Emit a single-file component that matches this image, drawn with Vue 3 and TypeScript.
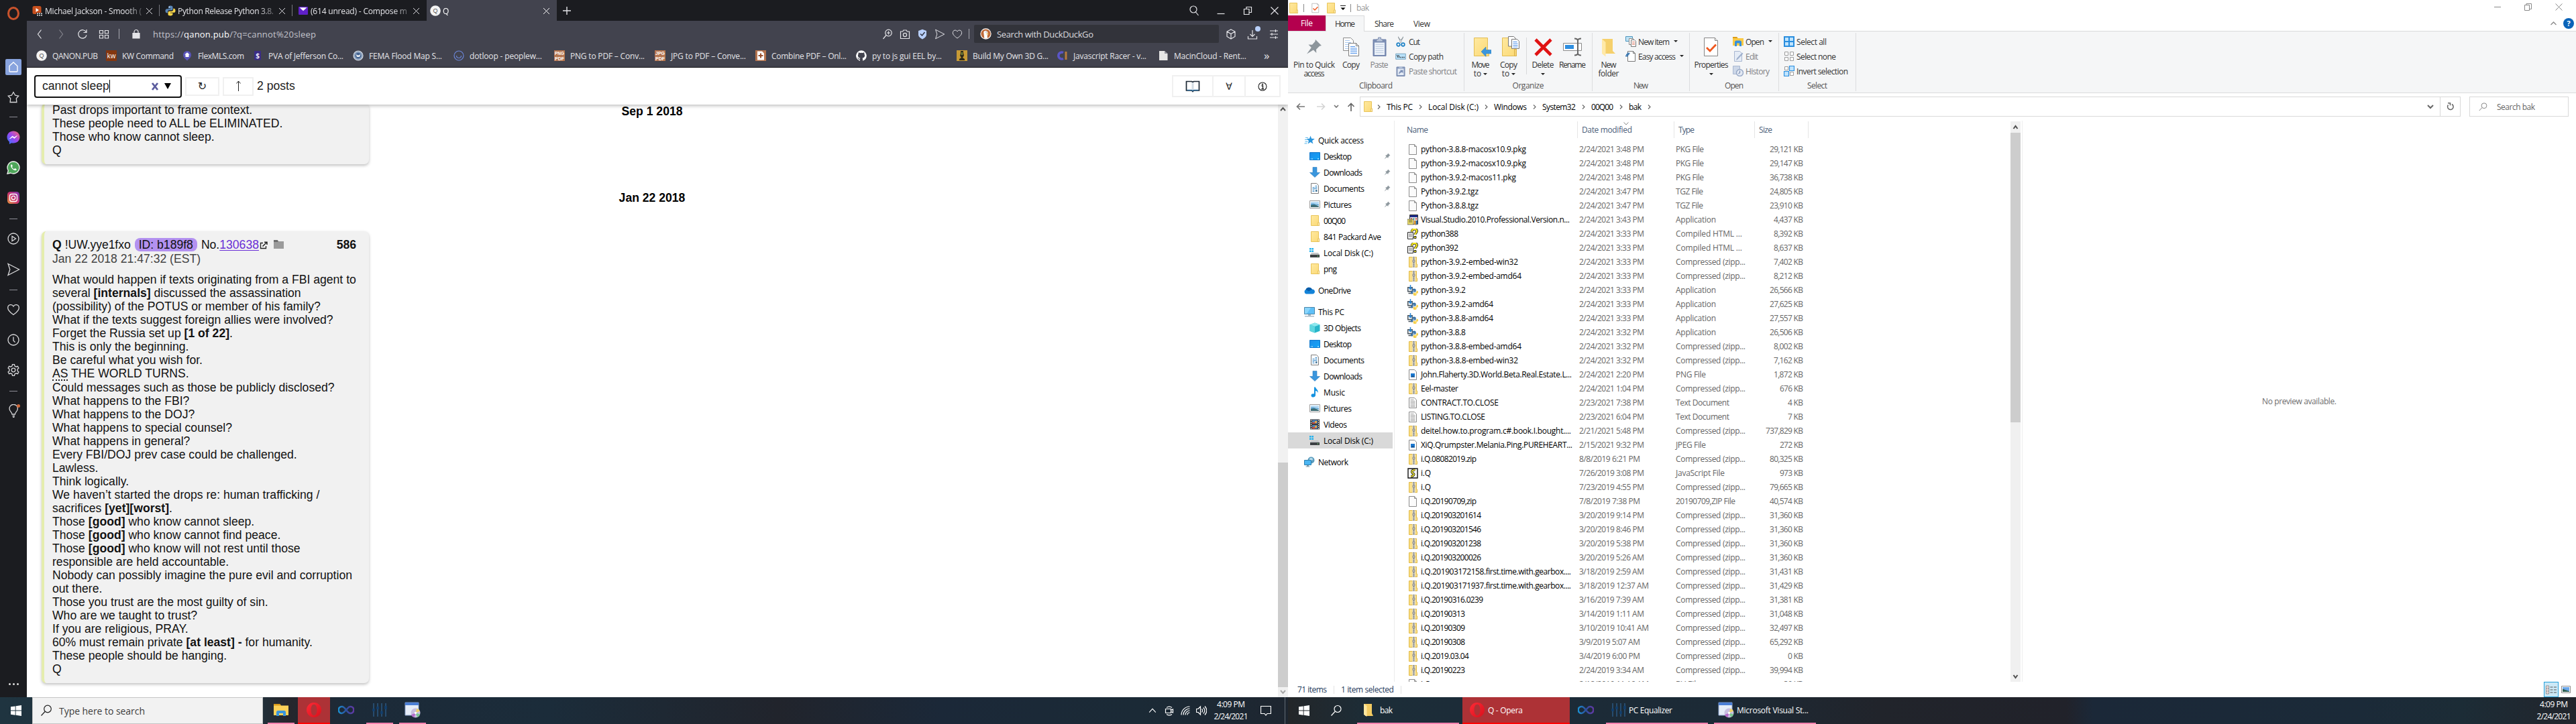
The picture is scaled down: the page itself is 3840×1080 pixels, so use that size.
<script setup lang="ts">
import type { Directive } from 'vue'

// Spreads a run of text over a given width by adjusting its tracking.
const vFit: Directive<HTMLElement, number | undefined> = {
  mounted(el, binding) {
    const target = binding.value
    const count = (el.textContent ?? '').trim().length
    if (!target || count < 2) return
    const range = document.createRange()
    range.selectNodeContents(el)
    const gap = (target - range.getBoundingClientRect().width) / (count - 1)
    el.style.letterSpacing = `${gap.toFixed(3)}px`
    el.style.marginRight = `${(-gap).toFixed(3)}px`
  },
}

interface Tab { icon: string; title: string; w: number; fit: number; active?: boolean }
const tabs: Tab[] = [
  { icon: 'i-video', title: 'Michael Jackson - Smooth (', w: 198, fit: 144 },
  { icon: 'i-python', title: 'Python Release Python 3.8.', w: 198, fit: 143 },
  { icon: 'i-yahoo', title: '(614 unread) - Compose m', w: 200, fit: 144 },
  { icon: 'i-qsite', title: 'Q', w: 194, fit: 0, active: true },
]

interface Bookmark { icon: string; title: string; w: number; fit: number }
const bookmarks: Bookmark[] = [
  { icon: 'i-qsite', title: 'QANON.PUB', w: 104, fit: 68 },
  { icon: 'i-kw', title: 'KW Command', w: 113, fit: 77 },
  { icon: 'i-flex', title: 'FlexMLS.com', w: 105, fit: 69 },
  { icon: 'i-pva', title: 'PVA of Jefferson Co...', w: 150, fit: 112 },
  { icon: 'i-fema', title: 'FEMA Flood Map S...', w: 150, fit: 109 },
  { icon: 'i-loop', title: 'dotloop - peoplew...', w: 150, fit: 108 },
  { icon: 'i-png', title: 'PNG to PDF – Conv...', w: 150, fit: 111 },
  { icon: 'i-jpg', title: 'JPG to PDF – Conve...', w: 150, fit: 112 },
  { icon: 'i-combine', title: 'Combine PDF – Onl...', w: 150, fit: 112 },
  { icon: 'i-github', title: 'py to js gui EEL by...', w: 150, fit: 104 },
  { icon: 'i-build', title: 'Build My Own 3D G...', w: 150, fit: 113 },
  { icon: 'i-racer', title: 'Javascript Racer - v...', w: 150, fit: 109 },
  { icon: 'i-page', title: 'MacinCloud - Rent...', w: 150, fit: 108 },
]

interface Rail { icon: string; h: number }
const rail: Rail[] = [
  { icon: 's-star', h: 45 }, { icon: '-', h: 15 }, { icon: 's-messenger', h: 46 },
  { icon: 's-whatsapp', h: 44 }, { icon: 's-insta', h: 46 }, { icon: '-', h: 16 },
  { icon: 's-play', h: 44 }, { icon: 's-send', h: 48 }, { icon: '-', h: 12 },
  { icon: 's-heart', h: 48 }, { icon: 's-clock', h: 42 }, { icon: 's-gear', h: 48 },
  { icon: '-', h: 14 }, { icon: 's-bulb', h: 46 },
]

const post: string[] = [
  'What would happen if texts originating from a FBI agent to',
  'several <b>[internals]</b> discussed the assassination',
  '(possibility) of the POTUS or member of his family?',
  'What if the texts suggest foreign allies were involved?',
  'Forget the Russia set up <b>[1 of 22]</b>.',
  'This is only the beginning.',
  'Be careful what you wish for.',
  '<abbr>AS</abbr> THE WORLD TURNS.',
  'Could messages such as those be publicly disclosed?',
  'What happens to the FBI?',
  'What happens to the DOJ?',
  'What happens to special counsel?',
  'What happens in general?',
  'Every FBI/DOJ prev case could be challenged.',
  'Lawless.',
  'Think logically.',
  'We haven’t started the drops re: human trafficking /',
  'sacrifices <b>[yet][worst]</b>.',
  'Those <b>[good]</b> who know cannot sleep.',
  'Those <b>[good]</b> who know cannot find peace.',
  'Those <b>[good]</b> who know will not rest until those',
  'responsible are held accountable.',
  'Nobody can possibly imagine the pure evil and corruption',
  'out there.',
  'Those you trust are the most guilty of sin.',
  'Who are we taught to trust?',
  'If you are religious, PRAY.',
  '60% must remain private <b>[at least] -</b> for humanity.',
  'These people should be hanging.',
  'Q',
]

interface NavItem { icon: string; label: string; fit: number; pin?: boolean; sel?: boolean; top?: boolean }
const nav: NavItem[] = [
  { icon: 'n-quick', label: 'Quick access', fit: 68, top: true },
  { icon: 'n-desktop', label: 'Desktop', fit: 42, pin: true },
  { icon: 'n-down', label: 'Downloads', fit: 58, pin: true },
  { icon: 'n-docs', label: 'Documents', fit: 61, pin: true },
  { icon: 'n-pics', label: 'Pictures', fit: 42, pin: true },
  { icon: 'n-folder', label: '00Q00', fit: 33 },
  { icon: 'n-folder', label: '841 Packard Ave', fit: 86 },
  { icon: 'n-disk', label: 'Local Disk (C:)', fit: 74 },
  { icon: 'n-folder', label: 'png', fit: 20 },
  { icon: 'n-cloud', label: 'OneDrive', fit: 49, top: true },
  { icon: 'n-pc', label: 'This PC', fit: 39, top: true },
  { icon: 'n-cube', label: '3D Objects', fit: 56 },
  { icon: 'n-desktop', label: 'Desktop', fit: 42 },
  { icon: 'n-docs', label: 'Documents', fit: 61 },
  { icon: 'n-down', label: 'Downloads', fit: 58 },
  { icon: 'n-music', label: 'Music', fit: 32 },
  { icon: 'n-pics', label: 'Pictures', fit: 42 },
  { icon: 'n-video', label: 'Videos', fit: 35 },
  { icon: 'n-disk', label: 'Local Disk (C:)', fit: 74, sel: true },
  { icon: 'n-net', label: 'Network', fit: 45, top: true },
]

type FileRow = [icon: string, name: string, nameWidth: number, date: string, type: string, size: string]
const ZIP = 'Compressed (zipp...'
const files: FileRow[] = [
  ['f-blank', 'python-3.8.8-macosx10.9.pkg', 157, '2/24/2021 3:48 PM', 'PKG File', '29,121 KB'],
  ['f-blank', 'python-3.9.2-macosx10.9.pkg', 157, '2/24/2021 3:48 PM', 'PKG File', '29,147 KB'],
  ['f-blank', 'python-3.9.2-macos11.pkg', 142, '2/24/2021 3:48 PM', 'PKG File', '36,738 KB'],
  ['f-blank', 'Python-3.9.2.tgz', 86, '2/24/2021 3:47 PM', 'TGZ File', '24,805 KB'],
  ['f-blank', 'Python-3.8.8.tgz', 86, '2/24/2021 3:47 PM', 'TGZ File', '23,910 KB'],
  ['f-setup', 'Visual.Studio.2010.Professional.Version.n...', 222, '2/24/2021 3:43 PM', 'Application', '4,437 KB'],
  ['f-help', 'python388', 56, '2/24/2021 3:33 PM', 'Compiled HTML ...', '8,392 KB'],
  ['f-help', 'python392', 56, '2/24/2021 3:33 PM', 'Compiled HTML ...', '8,637 KB'],
  ['f-zip', 'python-3.9.2-embed-win32', 145, '2/24/2021 3:33 PM', ZIP, '7,402 KB'],
  ['f-zip', 'python-3.9.2-embed-amd64', 150, '2/24/2021 3:33 PM', ZIP, '8,212 KB'],
  ['f-pyinst', 'python-3.9.2', 67, '2/24/2021 3:33 PM', 'Application', '26,566 KB'],
  ['f-pyinst', 'python-3.9.2-amd64', 108, '2/24/2021 3:33 PM', 'Application', '27,625 KB'],
  ['f-pyinst', 'python-3.8.8-amd64', 108, '2/24/2021 3:33 PM', 'Application', '27,557 KB'],
  ['f-pyinst', 'python-3.8.8', 67, '2/24/2021 3:32 PM', 'Application', '26,506 KB'],
  ['f-zip', 'python-3.8.8-embed-amd64', 150, '2/24/2021 3:32 PM', ZIP, '8,002 KB'],
  ['f-zip', 'python-3.8.8-embed-win32', 145, '2/24/2021 3:32 PM', ZIP, '7,162 KB'],
  ['f-image', 'John.Flaherty.3D.World.Beta.Real.Estate.L...', 225, '2/24/2021 2:20 PM', 'PNG File', '1,872 KB'],
  ['f-zip', 'Eel-master', 56, '2/24/2021 1:04 PM', ZIP, '676 KB'],
  ['f-text', 'CONTRACT.TO.CLOSE', 116, '2/23/2021 7:38 PM', 'Text Document', '4 KB'],
  ['f-text', 'LISTING.TO.CLOSE', 96, '2/23/2021 6:04 PM', 'Text Document', '7 KB'],
  ['f-zip', 'deitel.how.to.program.c#.book.I.bought....', 224, '2/21/2021 5:48 PM', ZIP, '737,829 KB'],
  ['f-image', 'XiQ.Qrumpster.Melania.Ping.PUREHEART...', 226, '2/15/2021 9:32 PM', 'JPEG File', '272 KB'],
  ['f-zip', 'i.Q.08082019.zip', 83, '8/8/2019 6:21 PM', ZIP, '80,325 KB'],
  ['f-js', 'i.Q', 15, '7/26/2019 3:08 PM', 'JavaScript File', '973 KB'],
  ['f-zip', 'i.Q', 15, '7/23/2019 4:55 PM', ZIP, '79,665 KB'],
  ['f-blank', 'i.Q.20190709,zip', 83, '7/8/2019 7:38 PM', '20190709,ZIP File', '40,574 KB'],
  ['f-zip', 'i.Q.201903201614', 90, '3/20/2019 9:14 PM', ZIP, '31,360 KB'],
  ['f-zip', 'i.Q.201903201546', 90, '3/20/2019 8:46 PM', ZIP, '31,360 KB'],
  ['f-zip', 'i.Q.201903201238', 90, '3/20/2019 5:38 PM', ZIP, '31,360 KB'],
  ['f-zip', 'i.Q.201903200026', 90, '3/20/2019 5:26 AM', ZIP, '31,360 KB'],
  ['f-zip', 'i.Q.201903172158.first.time.with.gearbox....', 224, '3/18/2019 2:59 AM', ZIP, '31,431 KB'],
  ['f-zip', 'i.Q.201903171937.first.time.with.gearbox....', 224, '3/18/2019 12:37 AM', ZIP, '31,429 KB'],
  ['f-zip', 'i.Q.20190316.0239', 93, '3/16/2019 7:39 AM', ZIP, '31,381 KB'],
  ['f-zip', 'i.Q.20190313', 66, '3/14/2019 1:11 AM', ZIP, '31,048 KB'],
  ['f-zip', 'i.Q.20190309', 66, '3/10/2019 10:41 AM', ZIP, '32,497 KB'],
  ['f-zip', 'i.Q.20190308', 66, '3/9/2019 5:07 AM', ZIP, '65,292 KB'],
  ['f-zip', 'i.Q.2019.03.04', 72, '3/4/2019 6:00 PM', ZIP, '0 KB'],
  ['f-zip', 'i.Q.20190223', 66, '2/24/2019 3:34 AM', ZIP, '39,994 KB'],
  ['f-blank', 'i.Q', 15, '2/18/2019 11:16 AM', 'BV File', '39 KB'],
]
const dateWidth: Record<number, number> = { 15: 91, 16: 91, 17: 97, 18: 104 }
const sizeWidth: Record<number, number> = { 4: 23, 5: 29, 6: 35, 8: 44, 9: 50, 10: 56 }
const typeWidth: Record<string, number> = {
  'PKG File': 42, 'TGZ File': 41, Application: 60, 'Compiled HTML ...': 99, [ZIP]: 104,
  'PNG File': 45, 'Text Document': 80, 'JPEG File': 45, 'JavaScript File': 73, '20190709,ZIP File': 89, 'BV File': 37,
}

interface Crumb { label: string; fit: number; w: number }
const crumbs: Crumb[] = [
  { label: 'This PC', fit: 39, w: 62 },
  { label: 'Local Disk (C:)', fit: 75, w: 98 },
  { label: 'Windows', fit: 49, w: 72 },
  { label: 'System32', fit: 50, w: 73 },
  { label: '00Q00', fit: 33, w: 56 },
  { label: 'bak', fit: 19, w: 42 },
]
</script>

<template>
  <svg class="defs" width="0" height="0" aria-hidden="true">
    <defs>
      <linearGradient id="g-msg" x1="0" y1="1" x2="1" y2="0"><stop offset="0" stop-color="#2f7bff" /><stop offset=".5" stop-color="#9a46f0" /><stop offset="1" stop-color="#ff6968" /></linearGradient>
      <linearGradient id="g-insta" x1="0" y1="1" x2="1" y2="0"><stop offset="0" stop-color="#e8993d" /><stop offset=".5" stop-color="#c8306f" /><stop offset="1" stop-color="#7b3bb8" /></linearGradient>
      <linearGradient id="g-blue" x1="0" y1="0" x2="1" y2="1"><stop offset="0" stop-color="#1e8ce8" /><stop offset="1" stop-color="#10a5f8" /></linearGradient>
      <linearGradient id="g-fold" x1="0" y1="0" x2="1" y2="1"><stop offset="0" stop-color="#ffe9a0" /><stop offset="1" stop-color="#fbd975" /></linearGradient>
      <linearGradient id="g-vs" x1="0" y1="0" x2="1" y2="0"><stop offset="0" stop-color="#1b8fd0" /><stop offset=".5" stop-color="#2c4f9c" /><stop offset="1" stop-color="#6238a4" /></linearGradient>
      <linearGradient id="g-opera" x1="0" y1="0" x2="1" y2="1"><stop offset="0" stop-color="#ff2a36" /><stop offset="1" stop-color="#d8101c" /></linearGradient>
    </defs>
    <!-- tab and bookmark icons -->
    <symbol id="i-video" viewBox="0 0 16 16"><rect x=".5" y="1" width="13" height="12" rx="2.5" fill="#c8501e" /><path d="M5.500 4v6l4.500-3z" fill="#fff" /><path d="M6 11h9v5H6z" fill="#1c1d21" /><path d="M7 11.500h2v1.500H7zM10 11.500h2v1.500h-2zM13 11.500h2v1.500h-2zM7 14h2v1.500H7zM10 14h2v1.500h-2zM13 14h2v1.500h-2z" fill="#ddd" /></symbol>
    <symbol id="i-python" viewBox="0 0 16 16"><path d="M8 .5C5.500.5 5 1.500 5 2.700V4.500h3.500v.7H3C1.500 5.200.5 6.300.5 8.300s1 3 2.200 3H4V9.500c0-1.200 1-2.200 2.200-2.200h3.500c1 0 1.800-.8 1.800-1.800V2.700C11.500 1.300 10.500.5 8 .5z" fill="#5a86b5" /><path d="M8 15.500c2.500 0 3.500-1 3.500-2.200v-1.800H8v-.7h5c1.500 0 2.500-1 2.500-2.900s-.8-3.200-2.200-3.200H12.200v1.700c0 1.200-1 2.300-2.200 2.300H6.300c-1 0-1.800.8-1.800 1.800v2.800c0 1.400 1 2.200 3.500 2.200z" fill="#f5d44a" /><circle cx="6.500" cy="2.500" r=".8" fill="#fff" /></symbol>
    <symbol id="i-yahoo" viewBox="0 0 16 16"><rect x="1" y="2" width="14" height="12" rx="1" fill="#5f20c8" /><path d="M2.500 3.200h11L8 8.300z" fill="#fff" /></symbol>
    <symbol id="i-qsite" viewBox="0 0 16 16"><circle cx="8" cy="8" r="7.800" fill="#f4f4f4" /><text x="8" y="11.200" font-size="9" text-anchor="middle" font-family="Liberation Sans, sans-serif" fill="#555">Q</text></symbol>
    <symbol id="i-kw" viewBox="0 0 16 16"><path d="M0 0h16v16H0z" fill="#83360f" /><text x="8" y="11.500" font-size="10" text-anchor="middle" font-family="Open Sans, sans-serif" fill="#fff">kw</text></symbol>
    <symbol id="i-flex" viewBox="0 0 16 16"><path d="M8 1a6 6 0 0 1 6 6.200C14 11 10 13 8 15.500 6 13 2 11 2 7.200A6 6 0 0 1 8 1z" fill="#5a55b8" /><path d="M8 3.200 4.300 6.500h1.200V10h5V6.500h1.200z" fill="#fff" /></symbol>
    <symbol id="i-pva" viewBox="0 0 16 16"><path d="M3 1h10v13.500H3z" fill="#3b2d85" /><text x="8" y="11.500" font-size="10" text-anchor="middle" font-weight="bold" font-family="Open Sans, sans-serif" fill="#e8e8f8">$</text></symbol>
    <symbol id="i-fema" viewBox="0 0 16 16"><circle cx="8" cy="8" r="7" fill="#8aa0bd" stroke="#d5dbe3" stroke-width="1.200" /><circle cx="8" cy="8" r="4.300" fill="#41618f" /><path d="M4.500 6 8 7.500 11.500 6 10 10H6z" fill="#e4e8ee" /></symbol>
    <symbol id="i-loop" viewBox="0 0 16 16"><circle cx="8" cy="8" r="7" fill="none" stroke="#6b86d8" stroke-width="1.200" /><path d="M4.500 8a3.500 3.500 0 0 0 7 0" fill="none" stroke="#6b86d8" stroke-width="1.200" /></symbol>
    <symbol id="i-png" viewBox="0 0 16 16"><path d="M0 0h16v16H0z" fill="#b5744e" /><text x="8" y="7" font-size="7" font-weight="bold" text-anchor="middle" font-family="Liberation Sans, sans-serif" fill="#fff" textLength="14" lengthAdjust="spacingAndGlyphs">PNG</text><text x="8" y="14.500" font-size="7" font-weight="bold" text-anchor="middle" font-family="Liberation Sans, sans-serif" fill="#fff" textLength="14" lengthAdjust="spacingAndGlyphs">PDF</text></symbol>
    <symbol id="i-jpg" viewBox="0 0 16 16"><path d="M0 0h16v16H0z" fill="#b5744e" /><text x="8" y="7" font-size="7" font-weight="bold" text-anchor="middle" font-family="Liberation Sans, sans-serif" fill="#fff" textLength="14" lengthAdjust="spacingAndGlyphs">JPG</text><text x="8" y="14.500" font-size="7" font-weight="bold" text-anchor="middle" font-family="Liberation Sans, sans-serif" fill="#fff" textLength="14" lengthAdjust="spacingAndGlyphs">PDF</text></symbol>
    <symbol id="i-combine" viewBox="0 0 16 16"><path d="M0 0h16v16H0z" fill="#b5744e" /><path d="M3 1.500h7l3 3v10H3z" fill="#fff" /><path d="M7 4.500h2V7h2.500v2H9v2.500H7V9H4.500V7H7z" fill="#9a5230" /></symbol>
    <symbol id="i-github" viewBox="0 0 16 16"><path d="M8 .3a7.900 7.900 0 0 0-2.500 15.400c.4 0 .5-.2.5-.4v-1.500c-2.200.5-2.700-1-2.700-1-.4-.9-.9-1.200-.9-1.200-.7-.5.1-.5.1-.5.800.1 1.200.8 1.200.8.700 1.200 1.900.9 2.300.7.1-.5.3-.9.500-1.100-1.800-.2-3.600-.9-3.600-4 0-.9.300-1.600.8-2.100-.1-.2-.4-1 .1-2.100 0 0 .7-.2 2.200.8a7.600 7.600 0 0 1 4 0c1.500-1 2.200-.8 2.200-.8.4 1.100.2 1.900.1 2.100.5.600.8 1.300.8 2.100 0 3.100-1.900 3.800-3.700 4 .3.300.6.800.6 1.500v2.200c0 .2.1.5.600.4A7.900 7.900 0 0 0 8 .3z" fill="#fff" /></symbol>
    <symbol id="i-build" viewBox="0 0 16 16"><path d="M0 0h16v16H0z" fill="#c79a35" /><path d="M6 1h4v3l1 4-2 3 3 2v2H4v-2l3-2-2-3 1-3z" fill="#2d2a1a" /><path d="M7 3h2v4H7z" fill="#7a8a3a" /></symbol>
    <symbol id="i-racer" viewBox="0 0 16 16"><path d="M9 3.500A5 5 0 1 0 9 12.500" fill="none" stroke="#5a55c8" stroke-width="3.500" /><path d="M11.500 2h3v12h-3z" fill="#b87b3c" /></symbol>
    <symbol id="i-page" viewBox="0 0 16 16"><path d="M2 1h8l4.500 4v10H2z" fill="#e6e6e6" /><path d="M10 1v4h4.500z" fill="#8e8f98" /></symbol>
    <!-- browser rail -->
    <symbol id="s-home" viewBox="0 0 20 20"><path d="M4 8.500 10 3l6 5.500V16a1 1 0 0 1-1 1H5a1 1 0 0 1-1-1z" /></symbol>
    <symbol id="s-star" viewBox="0 0 20 20"><path d="m10 2.500 2.700 4.700 5 .9-3.400 3.700.6 5.700H5.100l.6-5.700-3.400-3.700 5-.9z" /></symbol>
    <symbol id="s-messenger" viewBox="0 0 20 20"><path d="M10 .5C4.500.5.5 4.400.5 9.500c0 2.900 1.300 5.300 3.400 7V20l3.300-1.800c.9.200 1.800.3 2.800.3 5.500 0 9.500-3.900 9.500-9S15.500.5 10 .5z" fill="url(#g-msg)" stroke="none" /><path d="m4.500 12 4-4 2.800 2L15.500 7.500l-4 4-2.800-2z" fill="#fff" stroke="#fff" stroke-width=".8" /></symbol>
    <symbol id="s-whatsapp" viewBox="0 0 20 20"><path d="M10 1a9 9 0 0 0-7.700 13.500L1 19.200l4.800-1.200A9 9 0 1 0 10 1z" fill="#4ea65a" stroke="#e9efe9" stroke-width="1.400" /><path d="M6.500 5.500C5 8 8 13.500 13 14.300c1.500-.3 1.800-1.300 1.600-2L12.300 11l-1.200 1.200C9.500 11.700 8.300 10.300 7.800 9l1-1L8 5.500z" fill="#fff" stroke="none" /></symbol>
    <symbol id="s-insta" viewBox="0 0 20 20"><rect x="1" y="1" width="18" height="18" rx="4.500" fill="url(#g-insta)" stroke="none" /><rect x="4.500" y="4.500" width="11" height="11" rx="3" stroke="#fff" /><circle cx="10" cy="10" r="2.700" stroke="#fff" /></symbol>
    <symbol id="s-play" viewBox="0 0 20 20"><circle cx="10" cy="10" r="8" /><path d="M8 6.500v7l5.500-3.500z" /></symbol>
    <symbol id="s-send" viewBox="0 0 20 20"><path d="M2 1.500 18.500 10 2 18.500 4.800 10z" /></symbol>
    <symbol id="s-heart" viewBox="0 0 20 20"><path d="M10 17.500C6 14.500 1.700 11.500 1.700 7.200c0-5 6.300-6.200 8.300-2.200 2-4 8.300-2.800 8.300 2.200 0 4.300-4.300 7.300-8.300 10.300z" /></symbol>
    <symbol id="s-clock" viewBox="0 0 20 20"><circle cx="10" cy="10" r="8" /><path d="M10 5.500V11l2.500 2.500" /></symbol>
    <symbol id="s-gear" viewBox="0 0 20 20"><circle cx="10" cy="10" r="2.800" /><path d="M8.500 1.700h3l.5 2.400 2.100 1.100 2.300-.8 1.500 2.600-1.800 1.600v2.800l1.800 1.600-1.500 2.600-2.300-.8-2.100 1.100-.5 2.400h-3L8 15.900l-2.100-1.100-2.300.8L2.100 13l1.800-1.600V8.600L2.100 7l1.500-2.600 2.300.8L8 4.100z" /></symbol>
    <symbol id="s-bulb" viewBox="0 0 20 20"><path d="M8 15c0-3-4-4.500-4-8.500a6.200 6.200 0 0 1 12.400 0c0 4-4 5.500-4 8.500zM8.500 17.500h3.500M9 19.500h2.500" /><circle cx="17.500" cy="2.500" r="2.500" fill="#d0683a" stroke="none" /></symbol>
    <!-- toolbar -->
    <symbol id="t-back" viewBox="0 0 16 16"><path d="m10.500 1.500-5 6.500 5 6.500" /></symbol>
    <symbol id="t-fwd" viewBox="0 0 16 16"><path d="m5.500 1.500 5 6.500-5 6.500" /></symbol>
    <symbol id="t-reload" viewBox="0 0 16 16"><path d="M13.500 5A6.200 6.200 0 1 0 14 9.500M14 1v4.500H9.500" /></symbol>
    <symbol id="t-grid" viewBox="0 0 16 16"><path d="M1.500 2.500h5v4.500h-5zM9.500 2.500h5v4.500h-5zM1.500 9.500h5V14h-5zM9.500 9.500h5V14h-5z" /></symbol>
    <symbol id="t-lock" viewBox="0 0 16 16"><path d="M3 6.500h10V14H3z" fill="#e4e4e8" /><path d="M5 6.500V4.500a3 3 0 0 1 6 0v2" /></symbol>
    <symbol id="t-zoom" viewBox="0 0 16 16"><circle cx="9.500" cy="6" r="4.800" /><path d="M9.500 3.500v5M7 6h5M6 9.500 1.500 15" /></symbol>
    <symbol id="t-cam" viewBox="0 0 16 16"><path d="M1.500 4h3.300l1-2h4.400l1 2h3.300v10.500h-13z" /><circle cx="8" cy="9" r="2.600" /></symbol>
    <symbol id="t-shield" viewBox="0 0 16 16"><path d="M8 .8 14 3v5.500c0 3.500-3.500 5.700-6 7-2.500-1.300-6-3.500-6-7V3z" fill="#b9d0fb" stroke="none" /><path d="m5 7.500 2.500 2.500L11.500 5" stroke="#2d3140" stroke-width="1.500" /></symbol>
    <symbol id="t-cube" viewBox="0 0 16 16"><path d="m8 1 6 3v7.500L8 15l-6-3.500V4zM2 4l6 3.500L14 4M8 7.500V15" /></symbol>
    <symbol id="t-dl" viewBox="0 0 16 16"><path d="M8 2v9M4.500 8 8 11.500 11.500 8M1.500 11v4h13v-4" /></symbol>
    <symbol id="t-set" viewBox="0 0 16 16"><path d="M2 3h12M2 8h12M2 13h12M10.500 1v4M5 6v4M10.500 11v4" /></symbol>
    <symbol id="t-search" viewBox="0 0 16 16"><circle cx="7" cy="6" r="5" /><path d="m10.500 10 4 5" /></symbol>
    <symbol id="t-min" viewBox="0 0 16 16"><path d="M2.500 12.500h11" /></symbol>
    <symbol id="t-restore" viewBox="0 0 16 16"><path d="M2.500 5.500h7.500v8H2.500zM6 5.500V2.500h7.500v8H10" /></symbol>
    <symbol id="t-close" viewBox="0 0 16 16"><path d="m2.500 2.500 11 11M13.500 2.500l-11 11" /></symbol>
    <symbol id="t-duck" viewBox="0 0 16 16"><circle cx="8" cy="8" r="7.700" fill="#fff" stroke="none" /><circle cx="8" cy="8" r="6.700" fill="#bf6a3a" stroke="none" /><path d="M6 14.500 5 6c0-3 4.500-3.500 5.500-.5L11 9l-1 1.500.5 4z" fill="#fff" stroke="none" /><path d="M8.500 7.500h4L9.500 9z" fill="#e8b532" stroke="none" /><circle cx="8.500" cy="5.500" r=".6" fill="#333" stroke="none" /></symbol>
    <!-- navigation pane -->
    <symbol id="n-quick" viewBox="0 0 16 16"><path d="m9.500 1.500 1.600 4.300 4.700.2-3.700 2.900 1.300 4.600-3.900-2.600-3.800 2.600 1.200-4.500L4 6l4-.2z" fill="#2a95dd" /><path d="M2 4.500h4M1 7.500h4M1.500 10.500h4M.5 13h4" stroke="#58b7ec" /></symbol>
    <symbol id="n-desktop" viewBox="0 0 16 16"><path d="M.5 2.500h15v11H.5z" fill="url(#g-blue)" stroke="#0b76cc" /><path d="M2 12h1M4 12h1M12 12h2" stroke="#fff" /></symbol>
    <symbol id="n-down" viewBox="0 0 16 16"><path d="M5 .5h6v8h4.500L8 15.500.5 8.500H5z" fill="#3a96dd" stroke="#2c7cc0" stroke-width=".6" /></symbol>
    <symbol id="n-docs" viewBox="0 0 16 16"><path d="M2.500.5h8l3 3v12h-11z" fill="#fff" stroke="#7d7d7d" /><path d="M4.500 6.500h3M8.500 4.500h3M8.500 6.500h3M4.500 8.500h7M4.500 10.500h3M4.500 12.500h3" stroke="#3a8bc8" /><path d="M9 10h2.500v3H9z" fill="#4a7a9c" /></symbol>
    <symbol id="n-pics" viewBox="0 0 16 16"><path d="M.5 2.500h15v11H.5z" fill="#fff" stroke="#9a9a9a" /><path d="M2 4h12v8H2z" fill="#b9dcf5" /><path d="M2 9c3-2 5-2 12 2v1H2z" fill="#3c6b72" /><path d="M2 7c3-1 5 0 12 1v1.500C9 8 5 8 2 9z" fill="#5aa0cf" /></symbol>
    <symbol id="n-folder" viewBox="0 0 16 16"><path d="M2.500.5h11v10.500h1v4.500h-12z" fill="url(#g-fold)" stroke="#e8c45a" /><path d="M12.500 11h2v4.500h-2z" fill="#fff0bc" stroke="#dfb84d" stroke-width=".7" /></symbol>
    <symbol id="n-disk" viewBox="0 0 16 16"><path d="M0 1h2.600v2.600H0zM3.400 1H6v2.600H3.400zM0 4.400h2.600V7H0zM3.400 4.400H6V7H3.400z" fill="#1fb1ee" /><path d="M3 8h10l2 3H1z" fill="#c3c6c8" /><path d="M1 11h14v4H1z" fill="#3c4043" /><circle cx="12.500" cy="13" r=".8" fill="#7be07b" /></symbol>
    <symbol id="n-cloud" viewBox="0 0 16 16"><path d="M3 13.500A3.500 3.500 0 0 1 2.500 7 5.300 5.300 0 0 1 12 6.500c2.500 0 4 1.700 4 3.600s-1.500 3.400-3.500 3.400z" fill="#1383d8" /><path d="M2.500 7A5.300 5.300 0 0 1 12 6.500L7 9.500z" fill="#0a5ca8" /></symbol>
    <symbol id="n-pc" viewBox="0 0 16 16"><path d="M.5 1.500h15v10H.5z" fill="#5fc0f7" stroke="#4b88ab" /><path d="m1 2h9L4 11H1z" fill="#8ad5fb" /><path d="M6 12h4v2H6zM1 14h14v1.500H1z" fill="#a9b9c4" /></symbol>
    <symbol id="n-cube" viewBox="0 0 16 16"><path d="m8 .5 7.500 2.700v9.600L8 15.500.5 12.800V3.200z" fill="#27b5c9" /><path d="m8 .5 7.500 2.700L8 6 .5 3.200z" fill="#8ee8ee" /><path d="M8 6v9.500L.5 12.800V3.200z" fill="#5fd6df" /></symbol>
    <symbol id="n-music" viewBox="0 0 16 16"><path d="M7 .5h2c.5 3 4.500 3.500 3.500 8.500C12 7 10.500 6 9 6v6.500c0 4-6.500 4-6.500.5C2.500 10.500 5 10 7 10.500z" fill="#1592e0" /></symbol>
    <symbol id="n-video" viewBox="0 0 16 16"><path d="M1 .5h14v15H1z" fill="#3b3b3b" /><path d="M4 1.500h8V7H4z" fill="#4b7fb5" /><path d="M4 9h8v5.500H4z" fill="#4b7fb5" /><path d="M4 5h5v2H4zM4 12h5v2.500H4z" fill="#c94e3f" /><path d="M8 3h3v3H8zM8 10h3v3H8z" fill="#e6a540" /><path d="M2.500 1.500v14M13.500 1.500v14" stroke="#fff" stroke-dasharray="1.500 1.500" /></symbol>
    <symbol id="n-net" viewBox="0 0 16 16"><circle cx="10.500" cy="5.500" r="5" fill="#5b9cbd" /><path d="M8 3c2-2 5-1 5 1s-3 3-5 2z" fill="#b7dcec" /><path d="M.5 5.500h10v7H.5z" fill="#4cb5f2" stroke="#2d7fae" /><path d="M4 13h3v1.500H4zM2.500 14.500h6v1h-6z" fill="#88a0ad" /></symbol>
    <symbol id="n-pin" viewBox="0 0 10 10"><path d="M6 .5 9.500 4l-1.200.3L6.500 6.200 6.300 8 4.500 6.500.5 9.500 3.500 5.500 2 3.700l1.800-.2L5.700 1.700z" fill="#8f999f" /></symbol>
    <!-- file types -->
    <symbol id="f-blank" viewBox="0 0 16 16"><path d="M2.500.5h8l3 3v12h-11z" fill="#fbfbfb" stroke="#8b8b8b" /><path d="M10.500.5v3h3" fill="none" stroke="#8b8b8b" /></symbol>
    <symbol id="f-text" viewBox="0 0 16 16"><path d="M2.500.5h8l3 3v12h-11z" fill="#fbfbfb" stroke="#8b8b8b" /><path d="M4.500 3.500h5M4.500 5.500h7M4.500 7.500h7M4.500 9.500h7M4.500 11.500h7M4.500 13.500h7" stroke="#a5a5a5" /></symbol>
    <symbol id="f-image" viewBox="0 0 16 16"><path d="M2.500.5h8l3 3v12h-11z" fill="#fbfbfb" stroke="#8b8b8b" /><path d="M5 6h6v5.500H5z" fill="#1c78cf" /><path d="M5 11.500 8 9l3 2.500z" fill="#124c86" /></symbol>
    <symbol id="f-zip" viewBox="0 0 16 16"><path d="M2.500.5h11v10.500h1v4.500h-12z" fill="#fbe08a" stroke="#e0b945" /><path d="M7.500 0h4v16h-4z" fill="#d8d8d0" /><path d="M9.500 0v16" stroke="#5c5c5c" stroke-width="1.600" stroke-dasharray="1.200 1" /><path d="M8 5h3v3H8z" fill="#c9c9c9" stroke="#666" stroke-width=".6" /></symbol>
    <symbol id="f-setup" viewBox="0 0 16 16"><path d="M3.500.5h12v14h-12z" fill="#e6e6e6" stroke="#333" /><path d="M4 1h11v3H4z" fill="#1b2a8a" /><path d="M5 5.500h2v2H5zM12 5.500h2v2h-2z" fill="#c33" /><path d="M8.500 5.500h2v2h-2z" fill="#2a8" /><path d="M0 7h9v8H0z" fill="#e8d96a" stroke="#555" stroke-width=".7" /><path d="M2 9h5M2 11h5" stroke="#6b6b2f" /><path d="M10 9h5v5l-2.500 2L10 14z" fill="#e79a28" /><path d="M12.500 9H15v5l-2.500 2z" fill="#2c6fb5" /></symbol>
    <symbol id="f-help" viewBox="0 0 16 16"><path d="M.5 5.500h8v10h-8z" fill="#fff" stroke="#222" /><path d="M2 8h5M2 10h5M2 12h5" stroke="#777" /><path d="M6.500 4.500C6.500 0 14.500-.5 14 4c-.3 2.500-2.500 2.500-2.500 5" fill="none" stroke="#222" stroke-width="3.800" /><path d="M6.500 4.500C6.500 0 14.500-.5 14 4c-.3 2.500-2.500 2.500-2.500 5" fill="none" stroke="#f5e81e" stroke-width="2.200" /><path d="M10 11.500h3v3h-3z" fill="#f5e81e" stroke="#222" /></symbol>
    <symbol id="f-pyinst" viewBox="0 0 16 16"><path d="M.7 3.700h6.500v6H.7zM1.500 12.500h7" fill="#e7ecef" stroke="#4a545c" stroke-width="1.400" /><path d="M4.500 0v6M2.500 4 4.500 6.500 6.500 4" fill="none" stroke="#2d86d3" stroke-width="1.500" /><path d="M10 5.500c-2 0-2.500.8-2.500 2v1.300h3v.6H6.500c-1 0-1.500.8-1.500 2s.5 2 1.500 2h1v-1c0-1 .8-1.700 1.700-1.700h2c.9 0 1.500-.7 1.500-1.500V7.500c0-1.200-.8-2-2.700-2z" fill="#3a73a6" /><path d="M11 16c2 0 2.700-.8 2.700-1.800v-.9H11v-.5h3.500c1 0 1.500-.8 1.500-2s-.5-2-1.300-2H13.500v1.300c0 1-.8 1.700-1.700 1.700h-1.600c-.8 0-1.400.6-1.400 1.400v1.300c0 1 .7 1.500 2.200 1.500z" fill="#f6cf48" /></symbol>
    <symbol id="f-js" viewBox="0 0 16 16"><path d="M1 1h14v14H1z" fill="#fff" stroke="#111" stroke-width="1.400" /><path d="M11.500 3c-6 0-6 4-3 5s.5 4.500-3.500 4.500" fill="none" stroke="#111" stroke-width="3.400" /><path d="M11.500 3c-6 0-6 4-3 5s.5 4.500-3.500 4.500" fill="none" stroke="#e8df3a" stroke-width="1.800" /></symbol>
    <!-- ribbon -->
    <symbol id="r-pin" viewBox="0 0 32 32"><path d="m18 5 9 9-3 .7-5 5 .3 5.300-4.500-4.500L5 26.500 11.800 17 7.500 12.500l5.500.2 4.300-4.700z" fill="#8d969c" /></symbol>
    <symbol id="r-copy" viewBox="0 0 32 32"><path d="M4.500 2.500h11l4 4v15h-15z" fill="#fff" stroke="#8b8b8b" /><path d="M7 6.500h7M7 9.500h9M7 12.500h8M7 15.500h8M7 18.500h8" stroke="#a8c8f0" /><path d="M12.500 10.500h11l4 4v15h-15z" fill="#fff" stroke="#7e7e7e" /><path d="M23.500 10.500v4h4" fill="none" stroke="#7e7e7e" /><path d="M15 15.500h7M15 18h10M15 20.500h10M15 23h10M15 25.500h10" stroke="#4f92ea" stroke-width="1.100" /></symbol>
    <symbol id="r-paste" viewBox="0 0 32 32"><path d="M7 5h19v24.500H7z" fill="#7d8fb5" stroke="#6e80a8" /><path d="M9 9.500h15V28H9z" fill="#eaf0f8" /><path d="M10.500 12.500h12M10.500 15.500h12M10.500 18.500h12M10.500 21.500h12M10.500 24.500h12" stroke="#c2d0e3" /><path d="M12 4.500h2.500V2h4v2.500H21V8h-9z" fill="#b9c5da" stroke="#8090b0" /></symbol>
    <symbol id="r-cut" viewBox="0 0 16 16"><path d="M4 0v2l4.500 8 1.200-2zM12 0v2L7.500 10 6.300 8z" fill="#8d979d" /><circle cx="4.500" cy="12.500" r="2.300" fill="none" stroke="#1a7fc4" stroke-width="1.700" /><circle cx="11.500" cy="12.500" r="2.300" fill="none" stroke="#1a7fc4" stroke-width="1.700" /></symbol>
    <symbol id="r-path" viewBox="0 0 16 16"><path d="M.7 4.200h14.600v8.100H.7z" fill="#b9e2fb" stroke="#7aa6bf" /><path d="M2.500 6 4 10M4.700 6l1.500 4" stroke="#222" /><path d="M7.500 9.500h1.300M10 9.500h1.300M12.400 9.500h1.300" stroke="#222" stroke-width="1.300" /></symbol>
    <symbol id="r-pshort" viewBox="0 0 16 16"><path d="M2 2h12v13.500H2z" fill="#8d9ebf" stroke="#7385aa" /><path d="M3.500 4.500h9V14h-9z" fill="#e5ecf6" /><path d="M5.500 1h5v2.500h-5z" fill="#b5c2d8" /><path d="M5.500 13c-.5-3 .5-4.500 2.500-5L6.800 6.500H11.500v4.700L10 9.700C8 10 6.500 11 5.500 13z" fill="#7c8fb6" /></symbol>
    <symbol id="r-move" viewBox="0 0 32 32"><path d="M6.500 2.500h20v18h2v9h-22z" fill="url(#g-fold)" stroke="#e2bd55" /><path d="m17 23 7-7v4.500h8V26h-8v4.500z" fill="#3b96dd" stroke="#2b78b8" stroke-width=".5" /></symbol>
    <symbol id="r-copyto" viewBox="0 0 32 32"><path d="M6.500 2.500h18v17h3v10h-21z" fill="url(#g-fold)" stroke="#e2bd55" /><path d="M24.500 19.500h3v10h-3z" fill="#f5d273" stroke="#dcb44a" /><path d="M15.500.5h8l2.500 2.500v12h-10.500z" fill="#fff" stroke="#777" /><path d="M20.500 4.500h8l3 3v11h-11z" fill="#fff" stroke="#777" /><path d="M22.500 8.500h6M22.500 11h7M22.500 13.500h7M22.500 16h7" stroke="#4f92ea" /></symbol>
    <symbol id="r-del" viewBox="0 0 32 32"><path d="M5 5 28 28M28 5 5 28" stroke="#e01313" stroke-width="4.600" fill="none" /></symbol>
    <symbol id="r-ren" viewBox="0 0 32 32"><path d="M2.500 10.500h27v11h-27z" fill="#fff" stroke="#8a8a8a" /><path d="M5 13h13v6H5z" fill="#2f8fe0" /><path d="M19 3.500c3 0 4.500 1 5 2.500.5-1.500 2-2.500 5-2.500M24 5.500v21M19 28.500c3 0 4.500-1 5-2.500.5 1.500 2 2.500 5 2.500" stroke="#666" stroke-width="2" fill="none" /></symbol>
    <symbol id="r-newf" viewBox="0 0 32 32"><path d="M6 4h16v18l4 4H10z" fill="#f5d06c" /><path d="M6 4 11.500 9v21.500L6 26z" fill="#ffe9a8" /></symbol>
    <symbol id="r-newi" viewBox="0 0 16 16"><path d="M.5.500h10v7H.5z" fill="#bfe3f5" stroke="#4b94bd" /><path d="M5.500 3.500h6v9h-6z" fill="#fff" stroke="#888" /><path d="M8.500 5.500h5l2 2v8h-7z" fill="#fff" stroke="#777" /><path d="M10 8.500h4M10 10.500h4M10 12.500h4" stroke="#e08a7a" /></symbol>
    <symbol id="r-easy" viewBox="0 0 16 16"><path d="M3.500.5h8l3 3v12h-11z" fill="#fff" stroke="#777" /><path d="M11.500.5v3h3" fill="none" stroke="#777" /><path d="M2.500 3.500h4M1 5.500h4.500M0 7.500h4" stroke="#1c64a8" stroke-width="1.300" /></symbol>
    <symbol id="r-prop" viewBox="0 0 32 32"><path d="M5.500 2.500h16l4 4v23h-20z" fill="#fff" stroke="#858585" /><path d="M21.500 2.500v4h4" fill="#eee" stroke="#858585" /><path d="m9 17 5 5 9-9.500" fill="none" stroke="#f0591f" stroke-width="2.800" /></symbol>
    <symbol id="r-open" viewBox="0 0 16 16"><path d="M0 1h6l1.500 2H16v11H0z" fill="#fbca45" /><path d="M0 1h6l1.500 2H0z" fill="#dc9c14" /><path d="M3 15V9a2.500 2.500 0 0 1 2.500-2.500h5A2.500 2.500 0 0 1 13 9v6h-3v-4.500H6V15z" fill="#3590dc" /></symbol>
    <symbol id="r-edit" viewBox="0 0 16 16"><path d="M2.500.5h8l3 3v12h-11z" fill="#e5ecf6" stroke="#a9b7d0" /><path d="m5 14 1-3 8-8.500 1.500 1.500-8 8.500z" fill="#9fb0cd" /></symbol>
    <symbol id="r-hist" viewBox="0 0 16 16"><path d="M.5.5h10v12H.5z" fill="#ccd7e8" stroke="#a9b7d0" /><circle cx="10.500" cy="10.500" r="5" fill="#e3e9f3" stroke="#97a8c6" stroke-width="1.400" /><path d="M10.500 7.500v3l-2 1.500" fill="none" stroke="#7d8fb5" stroke-width="1.200" /></symbol>
    <symbol id="r-all" viewBox="0 0 16 16"><path d="M0 0h16v16H0z" fill="#2a8ede" /><path d="M2 2h5v5H2zM9 2h5v5H9zM2 9h5v5H2zM9 9h5v5H9z" fill="#bfe4ff" /></symbol>
    <symbol id="r-none" viewBox="0 0 16 16"><path d="M1.500 1.500h5v5h-5zM9.500 1.500h5v5h-5zM1.500 9.500h5v5h-5zM9.500 9.500h5v5h-5z" fill="#fff" stroke="#9c9c9c" /></symbol>
    <symbol id="r-inv" viewBox="0 0 16 16"><path d="M1.500 1.500h5v5h-5zM9.500 9.500h5v5h-5z" fill="#fff" stroke="#9c9c9c" /><path d="M8.500.5h7v7h-7zM.5 8.500h7v7h-7z" fill="#bfe4ff" stroke="#2a8ede" stroke-width="1.200" /></symbol>
    <!-- taskbar -->
    <symbol id="k-win" viewBox="0 0 16 16"><path d="M0 2.300 6.700 1.400v6.200H0zM7.600 1.200 16 0v7.600H7.600zM0 8.500h6.700v6.200L0 13.800zM7.600 8.500H16V16l-8.400-1.200z" fill="#fff" /></symbol>
    <symbol id="k-files" viewBox="0 0 22 20"><path d="M0 1h9l2 2.500h11V18H0z" fill="#fbd159" /><path d="M0 1h9l2 2.500H0z" fill="#d89a1a" /><path d="M4 19v-5.500A2.500 2.500 0 0 1 6.500 11h9a2.500 2.500 0 0 1 2.500 2.500V19h-4v-4H8v4z" fill="#3a96dd" /></symbol>
    <symbol id="k-opera" viewBox="0 0 24 24"><path fill-rule="evenodd" d="M12 1a11 11 0 1 0 0 22 11 11 0 0 0 0-22zm0 2.800c2.800 0 4.500 3.500 4.500 8.200s-1.700 8.200-4.500 8.200S7.500 16.700 7.500 12 9.200 3.800 12 3.800z" fill="url(#g-opera)" /></symbol>
    <symbol id="k-vs" viewBox="0 0 24 14"><path d="M12 7C9.500 3.500 7.500 2 5.700 2a4.500 4.500 0 0 0 0 10C8.500 12 9.500 9.500 12 7s3.500-5 6.300-5a4.500 4.500 0 0 1 0 10C16.500 12 14.500 10.500 12 7z" fill="none" stroke="url(#g-vs)" stroke-width="2.600" /></symbol>
    <symbol id="k-eq" viewBox="0 0 22 22"><path d="M2 1v20M8 1v20M14 1v20M20 1v20" stroke="#2d5f8c" stroke-width="1.300" /><path d="M2 9v4M8 6v4M14 13v4M20 5v5" stroke="#123f6d" stroke-width="3.600" /></symbol>
    <symbol id="k-disc" viewBox="0 0 24 24"><path d="M1 1h20v19H1z" fill="#e6edf8" stroke="#8fa6cf" /><path d="M1 1h20v4H1z" fill="#4b7fd6" /><circle cx="16.500" cy="16.500" r="7" fill="#c9bfe0" /><path d="m16.500 16.500 2-6.700a7 7 0 0 1 4.500 4z" fill="#efd26a" /><path d="m16.500 16.500-2 6.700a7 7 0 0 1-4.500-4z" fill="#b569c9" /><path d="m16.500 16.500 6.700 2a7 7 0 0 1-4 4.500z" fill="#79c68f" /><circle cx="16.500" cy="16.500" r="1.800" fill="#fff" /></symbol>
    <symbol id="k-up" viewBox="0 0 16 16"><path d="m2.500 11 5.500-6 5.500 6" /></symbol>
    <symbol id="k-meet" viewBox="0 0 16 16"><path d="M2.500 5.500h8v6h-8zM10.500 7.500l3-1.500v5l-3-1.500M4 3.500c2.500-1.800 5.500-1.800 8 0M4 13.500c2.500 1.800 5.500 1.800 8 0" /></symbol>
    <symbol id="k-wifi" viewBox="0 0 16 16"><path d="M2 14.500A12.500 12.500 0 0 1 14.500 2M5 14.500A9.500 9.500 0 0 1 14.500 5M8 14.500A6.500 6.500 0 0 1 14.500 8M11 14.500a3.500 3.500 0 0 1 3.500-3.500" /></symbol>
    <symbol id="k-vol" viewBox="0 0 16 16"><path d="M.5 5.500H3l3.500-3.500v12L3 10.500H.5zM8.500 5.500c1.300 1.500 1.300 3.500 0 5M10.800 3.500c2.500 2.700 2.500 6.300 0 9M13 1.500c3.500 4 3.500 9 0 13" /></symbol>
    <symbol id="k-note" viewBox="0 0 16 16"><path d="M.5 1.500h15v11H10l-2 2.500-2-2.500H.5z" /></symbol>
  </svg>

  <main class="screen">
    <!-- left monitor -->
    <section class="monitor">
      <div class="opera">
        <aside class="rail">
          <div class="rail-logo"><svg width="20" height="20"><ellipse cx="10" cy="10" rx="7.500" ry="8.500" fill="none" stroke="#c9532c" stroke-width="3" /></svg></div>
          <div class="rail-home"><svg width="20" height="20"><use href="#s-home" /></svg></div>
          <div v-for="(r, i) in rail" :key="i" class="rail-item" :style="{ height: r.h + 'px' }">
            <i v-if="r.icon === '-'" class="dash"></i>
            <svg v-else width="20" height="20"><use :href="'#' + r.icon" /></svg>
          </div>
          <div class="rail-dots"><i></i><i></i><i></i></div>
        </aside>
        <div class="browser">
          <div class="tabs">
            <div v-for="t in tabs" :key="t.title" class="tab" :class="{ active: t.active }" :style="{ width: t.w + 'px' }">
              <svg width="16" height="16"><use :href="'#' + t.icon" /></svg>
              <div class="tab-title"><span v-fit="t.fit">{{ t.title }}</span></div>
              <svg class="line" width="13" height="13"><use href="#t-close" /></svg>
            </div>
            <svg class="line plus" width="14" height="14"><path d="M7 1v12M1 7h12" /></svg>
            <div class="winctl">
              <svg class="line" width="16" height="16"><use href="#t-search" /></svg>
              <svg class="line" width="16" height="16"><use href="#t-min" /></svg>
              <svg class="line" width="16" height="16"><use href="#t-restore" /></svg>
              <svg class="line" width="16" height="16"><use href="#t-close" /></svg>
            </div>
          </div>
          <div class="toolbar">
            <div class="tb-left">
              <svg class="line" width="16" height="16"><use href="#t-back" /></svg>
              <svg class="line dim" width="16" height="16"><use href="#t-fwd" /></svg>
              <svg class="line" width="16" height="16"><use href="#t-reload" /></svg>
              <svg class="line" width="16" height="16"><use href="#t-grid" /></svg>
            </div>
            <i class="tb-sep"></i>
            <svg class="line lock" width="16" height="16"><use href="#t-lock" /></svg>
            <span class="url" v-fit="243">https://<b>qanon.pub</b>/?q=cannot%20sleep</span>
            <div class="tb-right">
              <svg class="line" width="16" height="16"><use href="#t-zoom" /></svg>
              <svg class="line" width="16" height="16"><use href="#t-cam" /></svg>
              <svg class="line" width="16" height="16"><use href="#t-shield" /></svg>
              <svg class="line" width="16" height="16" viewBox="0 0 20 20"><use href="#s-send" width="20" height="20" /></svg>
              <svg class="line" width="16" height="16" viewBox="0 0 20 20"><use href="#s-heart" width="20" height="20" /></svg>
            </div>
            <i class="tb-sep"></i>
            <div class="ddg"><svg width="17" height="17"><use href="#t-duck" /></svg><span v-fit="144">Search with DuckDuckGo</span></div>
            <div class="tb-end">
              <svg class="line" width="16" height="16"><use href="#t-cube" /></svg>
              <div class="dl"><svg class="line" width="16" height="16"><use href="#t-dl" /></svg><i></i></div>
              <svg class="line" width="16" height="16"><use href="#t-set" /></svg>
            </div>
          </div>
          <div class="bookmarks">
            <div v-for="b in bookmarks" :key="b.title" class="bm" :style="{ width: b.w + 'px' }">
              <svg width="16" height="16"><use :href="'#' + b.icon" /></svg><span v-fit="b.fit">{{ b.title }}</span>
            </div>
            <span class="more">»</span>
          </div>
          <div class="page">
            <header class="bar">
              <div class="query"><span>cannot sleep</span><i class="caret"></i><svg class="clear" width="12" height="12"><path d="m2 1 8 10M10 1 2 11" stroke="#5b5c9e" stroke-width="2.800" /></svg><svg width="11" height="11"><path d="M0 1h10L5 10z" /></svg></div>
              <button class="btn b1">↻</button>
              <button class="btn b2"><svg width="9" height="17"><path d="M4.500 16V1M1.500 4.500l3-3.500 3 3.500" fill="none" stroke="#222" /></svg></button>
              <span class="count">2 posts</span>
              <div class="tools">
                <div class="tool t1"><svg width="22" height="18"><path d="M1.500 1.500h8l1.500 1 1.500-1h8v13.500h-8l-1.500 1.500-1.500-1.500h-8z" fill="#fff" stroke="#1b2733" stroke-width="1.700" /><path d="M2.500 14.500h7l1.500 1 1.500-1h7" fill="none" stroke="#2d6b9c" stroke-width="1.500" /><path d="M11 3v11" stroke="#d3dce4" stroke-width="3" /></svg></div>
                <div class="tool t2">∀</div>
                <div class="tool t3"><svg width="16" height="16"><circle cx="8" cy="8" r="6" fill="none" stroke="#222" stroke-width="1.100" /><path d="M8 3.800v1.800" stroke="#222" stroke-width="2.200" /><path d="M6.500 7h2v4.500M6.300 11.700h3.800" stroke="#222" stroke-width="1.400" fill="none" /></svg></div>
              </div>
            </header>
            <div class="feed">
              <div class="posts">
                <article class="card first">
                  <p>Past drops important to frame context.</p>
                  <p>These people need to ALL be ELIMINATED.</p>
                  <p>Those who know cannot sleep.</p>
                  <p>Q</p>
                </article>
                <article class="card second">
                  <div class="head">
                    <b>Q</b><span class="trip" v-fit="98">!UW.yye1fxo</span><span class="badge">ID: b189f8</span><span>No.</span><a>130638</a>
                    <svg width="12" height="12"><path d="M5 2.500H1.500v8h8V7" fill="none" stroke="#222" stroke-width="1.300" /><path d="M4.500 7.500 10.500 1.500M7 1.200h4V5" fill="none" stroke="#222" stroke-width="1.500" /></svg>
                    <svg class="fold" width="15" height="13"><path d="M0 0h5.500l1.500 2h8v11H0z" fill="#9b9b9b" /><path d="M0 0h5.500l1.500 2-1 1H0z" fill="#6d6d6d" /></svg>
                    <b class="num">586</b>
                  </div>
                  <div class="when">Jan 22 2018 21:47:32 (EST)</div>
                  <div class="body"><p v-for="(line, i) in post" :key="i" v-html="line"></p></div>
                </article>
              </div>
              <div class="dates"><h4>Sep 1 2018</h4><h4>Jan 22 2018</h4></div>
              <div class="scroll">
                <svg width="15" height="14"><path d="m4 9 3.500-4L11 9" fill="none" stroke="#555" stroke-width="2" /></svg>
                <div class="thumb"></div>
                <svg width="15" height="15"><path d="m4 5 3.500 4L11 5" fill="none" stroke="#a8a8a8" stroke-width="2" /></svg>
              </div>
            </div>
          </div>
        </div>
      </div>
      <footer class="taskbar">
        <div class="start"><svg width="16" height="16"><use href="#k-win" /></svg></div>
        <div class="find"><svg width="18" height="18"><circle cx="11" cy="6.500" r="5.300" fill="none" stroke="#222" stroke-width="1.200" /><path d="m7 10.500-5.500 6" stroke="#222" stroke-width="1.200" /></svg><span v-fit="128">Type here to search</span></div>
        <div class="app lit a-files"><svg width="22" height="20"><use href="#k-files" /></svg></div>
        <div class="app a-opera"><svg width="24" height="24"><use href="#k-opera" /></svg></div>
        <div class="app a-vs"><svg width="24" height="14"><use href="#k-vs" /></svg></div>
        <div class="app lit a-eq"><svg width="22" height="22"><use href="#k-eq" /></svg></div>
        <div class="app lit a-disc"><svg width="24" height="24"><use href="#k-disc" /></svg></div>
        <div class="tray">
          <svg class="line" width="14" height="14" viewBox="0 0 16 16"><use href="#k-up" width="16" height="16" /></svg>
          <svg class="line" width="16" height="16"><use href="#k-meet" /></svg>
          <svg class="line" width="16" height="16"><use href="#k-wifi" /></svg>
          <svg class="line" width="16" height="16"><use href="#k-vol" /></svg>
        </div>
        <div class="clock"><span v-fit="42">4:09 PM</span><span v-fit="51">2/24/2021</span></div>
        <svg class="line note" width="16" height="16"><use href="#k-note" /></svg>
        <i class="peek"></i>
      </footer>
    </section>

    <!-- right monitor -->
    <section class="monitor explorer">
      <div class="title">
        <svg width="16" height="16"><use href="#n-folder" /></svg><i></i>
        <svg class="q1" width="16" height="16" viewBox="0 0 32 32"><use href="#r-prop" width="32" height="32" /></svg>
        <svg class="q2" width="16" height="16"><use href="#n-folder" /></svg>
        <svg class="q3" width="8" height="8"><path d="M0 .5h8" stroke="#222" /><path d="M.5 3.500h7L4 7z" /></svg><i></i>
        <span v-fit="19">bak</span>
        <div class="ctl">
          <svg width="10" height="11"><path d="M0 5.500h10" /></svg>
          <svg width="11" height="11"><path d="M.5 2.500h7v8h-7zM3 2.500V.5h7.500v8h-3" /></svg>
          <svg width="11" height="11"><path d="m.5.5 10 10M10.500.5l-10 10" /></svg>
        </div>
      </div>
      <div class="rtabs">
        <span class="file"><em v-fit="18">File</em></span><span class="home"><em v-fit="30">Home</em></span><span class="share"><em v-fit="29">Share</em></span><span class="view"><em v-fit="25">View</em></span>
        <div class="help"><svg width="9" height="6"><path d="m.5 5 4-4 4 4" fill="none" stroke="#888" stroke-width="1.300" /></svg><b>?</b></div>
      </div>
      <div class="ribbon">
        <div class="group clip">
          <div class="tools-row">
            <div class="big w78"><svg width="32" height="32"><use href="#r-pin" /></svg><span v-fit="62">Pin to Quick</span><span v-fit="31">access</span></div>
            <div class="big w32"><svg width="32" height="32"><use href="#r-copy" /></svg><span v-fit="26">Copy</span></div>
            <div class="big w50 off"><svg width="32" height="32"><use href="#r-paste" /></svg><span v-fit="27">Paste</span></div>
            <div class="smalls">
              <div><svg width="16" height="16"><use href="#r-cut" /></svg><span v-fit="17">Cut</span></div>
              <div><svg width="16" height="16"><use href="#r-path" /></svg><span v-fit="52">Copy path</span></div>
              <div class="off"><svg width="16" height="16"><use href="#r-pshort" /></svg><span v-fit="72">Paste shortcut</span></div>
            </div>
          </div>
          <label><em v-fit="50">Clipboard</em></label>
        </div>
        <div class="group org">
          <div class="tools-row">
            <div class="big w48"><svg width="32" height="32"><use href="#r-move" /></svg><span v-fit="27">Move</span><span>to <i class="tri"></i></span></div>
            <div class="big w36"><svg width="32" height="32"><use href="#r-copyto" /></svg><span v-fit="26">Copy</span><span>to <i class="tri"></i></span></div>
            <i class="vsep"></i>
            <div class="big w48"><svg width="32" height="32"><use href="#r-del" /></svg><span v-fit="33">Delete</span><span><i class="tri"></i></span></div>
            <div class="big w40"><svg width="32" height="32"><use href="#r-ren" /></svg><span v-fit="40">Rename</span></div>
          </div>
          <label><em v-fit="47">Organize</em></label>
        </div>
        <div class="group new">
          <div class="tools-row">
            <div class="big w48"><svg width="32" height="32"><use href="#r-newf" /></svg><span v-fit="23">New</span><span v-fit="31">folder</span></div>
            <div class="smalls tight">
              <div><svg width="16" height="16"><use href="#r-newi" /></svg><span v-fit="47">New item</span><i class="tri"></i></div>
              <div><svg width="16" height="16"><use href="#r-easy" /></svg><span v-fit="56">Easy access</span><i class="tri"></i></div>
            </div>
          </div>
          <label><em v-fit="22">New</em></label>
        </div>
        <div class="group open">
          <div class="tools-row">
            <div class="big w64"><svg width="32" height="32"><use href="#r-prop" /></svg><span v-fit="51">Properties</span><span><i class="tri"></i></span></div>
            <div class="smalls tight">
              <div><svg width="16" height="16"><use href="#r-open" /></svg><span v-fit="28">Open</span><i class="tri"></i></div>
              <div class="off"><svg width="16" height="16"><use href="#r-edit" /></svg><span v-fit="19">Edit</span></div>
              <div class="off"><svg width="16" height="16"><use href="#r-hist" /></svg><span v-fit="36">History</span></div>
            </div>
          </div>
          <label><em v-fit="28">Open</em></label>
        </div>
        <div class="group sel">
          <div class="tools-row">
            <div class="smalls tight">
              <div><svg width="16" height="16"><use href="#r-all" /></svg><span v-fit="45">Select all</span></div>
              <div><svg width="16" height="16"><use href="#r-none" /></svg><span v-fit="59">Select none</span></div>
              <div><svg width="16" height="16"><use href="#r-inv" /></svg><span v-fit="77">Invert selection</span></div>
            </div>
          </div>
          <label><em v-fit="30">Select</em></label>
        </div>
      </div>
      <div class="address">
        <svg class="ar a1" width="14" height="12"><path d="M13 6H1.500M6 1.500 1.500 6 6 10.500" /></svg>
        <svg class="ar a2" width="14" height="12"><path d="M1 6h11.500M8 1.500 12.500 6 8 10.500" /></svg>
        <svg class="ar a3" width="8" height="6"><path d="m1 1 3 3 3-3" /></svg>
        <svg class="ar a4" width="12" height="13"><path d="M6 13V1.500M1.500 6 6 1.500 10.500 6" /></svg>
        <div class="path">
          <svg class="pf" width="16" height="16"><use href="#n-folder" /></svg>
          <svg class="ch" width="5" height="7"><path d="m1 .5 3 3-3 3" /></svg>
          <div v-for="c in crumbs" :key="c.label" class="crumb" :style="{ width: c.w - 2 + 'px' }">
            <span v-fit="c.fit">{{ c.label }}</span><svg class="ch" width="5" height="7"><path d="m1 .5 3 3-3 3" /></svg>
          </div>
          <div class="pend"><svg width="10" height="7"><path d="m1 1 4 4 4-4" /></svg></div>
          <div class="refresh"><svg width="11" height="12"><path d="M8 2.500A4.300 4.300 0 1 1 2.500 3.500M2 .8h3.500v3.500" /></svg></div>
        </div>
        <div class="search"><svg width="13" height="13"><circle cx="8" cy="4.700" r="3.900" /><path d="M5 7.500.8 12" /></svg><span v-fit="57">Search bak</span></div>
      </div>
      <div class="panes">
        <nav class="nav">
          <div v-for="(n, i) in nav" :key="i" class="nv" :class="{ top: n.top, sel: n.sel }">
            <svg width="16" height="16"><use :href="'#' + n.icon" /></svg><span v-fit="n.fit">{{ n.label }}</span>
            <svg v-if="n.pin" class="pin" width="10" height="10"><use href="#n-pin" /></svg>
          </div>
        </nav>
        <div class="list">
          <div class="cols">
            <span class="c1"><em v-fit="32">Name</em></span><span class="c2"><em v-fit="75">Date modified</em><svg width="8" height="5"><path d="m.5.5 3.500 3.500L7.500.5" fill="none" stroke="#888" /></svg></span><span class="c3"><em v-fit="24">Type</em></span><span class="c4"><em v-fit="20">Size</em></span>
          </div>
          <div class="rows">
            <div v-for="(f, i) in files" :key="i" class="row">
              <svg width="16" height="16"><use :href="'#' + f[0]" /></svg>
              <span class="nm"><em v-fit="f[2]">{{ f[1] }}</em></span>
              <span class="dt"><em v-fit="dateWidth[f[3].length]">{{ f[3] }}</em></span>
              <span class="ty"><em v-fit="typeWidth[f[4]]">{{ f[4] }}</em></span>
              <span class="sz"><em v-fit="sizeWidth[f[5].length]">{{ f[5] }}</em></span>
            </div>
          </div>
        </div>
        <div class="escroll">
          <svg width="15" height="17"><path d="m4.500 11 3-4 3 4" fill="none" stroke="#505050" stroke-width="2" /></svg>
          <div class="ethumb"></div>
          <svg class="dn" width="15" height="17"><path d="m4.500 7 3 4 3-4" fill="none" stroke="#505050" stroke-width="2" /></svg>
        </div>
        <div class="preview"><span v-fit="111">No preview available.</span></div>
      </div>
      <div class="status">
        <span v-fit="44">71 items</span><i></i><span class="s2" v-fit="79">1 item selected</span><i></i>
        <div class="views">
          <div class="v1"><svg width="16" height="14"><path d="M.5 1h4v12h-4zM.5 5h4M.5 9h4" fill="#fff" stroke="#888" /><path d="M6.500 3h4M6.500 7h4M6.500 11h4M12 3h4M12 7h4M12 11h4" stroke="#555" /><path d="M2 3h1M2 7h1M2 11h1" stroke="#c44" /></svg></div>
          <svg width="14" height="11"><path d="M.5.5h13v10H.5z" fill="#fff" stroke="#8a8a8a" /><path d="M2 2h10v7H2z" fill="#6ba7ea" /><path d="M2 5c3 0 5 2 10 3v1H2z" fill="#2c5d50" /></svg>
        </div>
      </div>
      <footer class="taskbar tb2">
        <div class="start"><svg width="16" height="16"><use href="#k-win" /></svg></div>
        <svg class="mag" width="18" height="18"><circle cx="11" cy="6.500" r="5" fill="none" stroke="#fff" stroke-width="1.200" /><path d="m7 10.500-5.500 6" stroke="#fff" stroke-width="1.200" /></svg>
        <div class="app lit w bak"><svg width="18" height="20"><path d="M3 1h12v14l2 4H5z" fill="#f3cb62" /><path d="M3 1 7.500 4v16L3 17z" fill="#ffe7a0" /></svg><span v-fit="19">bak</span></div>
        <div class="app w op"><svg width="24" height="24"><use href="#k-opera" /></svg><span v-fit="52">Q - Opera</span></div>
        <div class="app vs2"><svg width="24" height="14"><use href="#k-vs" /></svg></div>
        <div class="app lit w pce"><svg width="22" height="22"><use href="#k-eq" /></svg><span v-fit="65">PC Equalizer</span></div>
        <div class="app lit w mvs"><svg width="24" height="24"><use href="#k-disc" /></svg><span v-fit="107">Microsoft Visual St...</span></div>
        <div class="clock"><span v-fit="42">4:09 PM</span><span v-fit="51">2/24/2021</span></div>
      </footer>
    </section>
  </main>
</template>

<style>
html, body { margin: 0; background: #fff; overflow: hidden; }
.body abbr { text-decoration: none; border-bottom: 2px dotted #222; display: inline-block; line-height: 17px; height: 17px; }
</style>

<style scoped>
* { box-sizing: border-box; }
svg { display: block; flex: none; overflow: visible; }
.defs { position: absolute; }
em { font-style: normal; }
.screen { display: flex; width: 3840px; height: 1080px; font-family: "Open Sans", "Noto Sans", sans-serif; font-size: 12px; white-space: nowrap; }
.monitor { width: 1920px; height: 1080px; display: flex; flex-direction: column; overflow: hidden; background: #fff; }
.line { fill: none; stroke: currentColor; stroke-width: 1.200; }

/* browser */
.opera { display: flex; height: 1040px; }
.rail { width: 40px; background: #1b1c20; display: flex; flex-direction: column; align-items: center; color: #d8d8da; }
.rail svg { fill: none; stroke: currentColor; stroke-width: 1.300; }
.rail-logo { padding-top: 10px; height: 88px; }
.rail-home { width: 24px; height: 24px; border-radius: 2px; background: #88a3de; color: #fff; display: flex; align-items: center; justify-content: center; margin-bottom: 10px; }
.rail-item { display: flex; align-items: center; justify-content: center; }
.dash { width: 12px; height: 1px; background: #8d8d96; }
.rail-dots { display: flex; gap: 3px; margin-top: auto; padding-bottom: 18px; }
.rail-dots i { width: 3px; height: 3px; border-radius: 50%; background: #ddd; }
.browser { width: 1880px; display: flex; flex-direction: column; color: #e4e4e8; }
.tabs { height: 31px; background: #1b1c20; display: flex; align-items: center; }
.tab { height: 31px; display: flex; align-items: center; padding: 1px 9px 0 8px; gap: 3px; background: linear-gradient(#77787e, #77787e) 100% 50% / 1px 17px no-repeat; }
.tab.active { background: #42434e; color: #fff; }
.tab:nth-child(3) { background-image: none; }
.tab.active svg:first-child { margin-left: -3px; }
.tab-title { flex: 1; -webkit-mask: linear-gradient(90deg, #000 calc(100% - 24px), rgba(0, 0, 0, .25)); mask: linear-gradient(90deg, #000 calc(100% - 24px), rgba(0, 0, 0, .25)); }
.plus { margin-left: 8px; stroke-width: 1.400; }
.winctl { margin-left: auto; display: flex; gap: 24px; padding-right: 12px; }
.toolbar { height: 39px; background: #42434e; display: flex; align-items: center; }
.tb-left { display: flex; gap: 16px; padding-left: 11px; }
.dim { opacity: .4; }
.tb-sep { width: 1px; height: 15px; background: #a9aab2; margin-left: 14px; }
.lock { margin-left: 17px; }
.url { font-size: 13px; margin-left: 17px; color: #c3c4cc; }
.url b { font-weight: 400; color: #fff; }
.tb-right { display: flex; gap: 10px; margin-left: auto; }
.tb-right + .tb-sep { margin-left: 9px; }
.ddg { width: 365px; height: 27px; margin-left: 7px; background: #32333a; border-radius: 2px; display: flex; align-items: center; gap: 8px; padding-left: 9px; font-size: 13px; color: #dadadf; }
.tb-end { display: flex; gap: 16px; padding: 0 13px 0 10px; }
.dl { position: relative; }
.dl i { position: absolute; left: 12px; top: -4px; width: 8px; height: 8px; border-radius: 50%; background: #b9d0fb; }
.bookmarks { height: 31px; background: #42434e; border-bottom: 1px solid #17181b; display: flex; align-items: center; padding: 0 0 4px 14px; }
.bm { display: flex; align-items: center; gap: 8px; flex: none; }
.more { font-size: 17px; margin-left: 8px; line-height: 16px; }

/* web page */
.page { height: 939px; display: flex; flex-direction: column; font-family: "Liberation Sans", Arial, sans-serif; font-size: 17.600px; color: #000; background: #fff; }
.bar { height: 55px; display: flex; align-items: center; box-shadow: 0 2px 5px rgba(0, 0, 0, .25); position: relative; z-index: 1; background: #fff; color: #222; flex: none; padding: 0 11px; }
.query { width: 220px; height: 34px; border: 2px solid #101010; border-radius: 4px; display: flex; align-items: center; padding-left: 10px; }
.caret { width: 1px; height: 19px; background: #000; }
.clear { margin-left: 61px; margin-right: 8px; }
.btn { margin: 0 0 0 5px; padding: 0; height: 28px; border: 2px solid #f0f0f0; background: #fff; font: 16px "DejaVu Sans", sans-serif; color: #222; display: flex; align-items: center; justify-content: center; }
.b1 { width: 51px; }
.b2 { width: 46px; }
.count { margin-left: 5px; }
.tools { margin-left: auto; display: flex; height: 33px; border: 2px solid #f0f0f0; background: #f0f0f0; gap: 2px; }
.tool { background: #fff; display: flex; align-items: center; justify-content: center; font: 14px "DejaVu Sans", sans-serif; }
.t1 { width: 58px; }
.t2 { width: 46px; }
.t3 { width: 50px; }
.feed { height: 884px; display: flex; overflow: hidden; }
.posts { width: 510px; padding-left: 22px; }
.card { width: 488px; background: #f1f1f1; border-left: 4px solid #e5edae; border-radius: 7px; box-shadow: 0 2px 4px rgba(0, 0, 0, .25); padding: 0 19px 11px 12px; line-height: 20px; color: #111; }
.card p { margin: 0; }
.first { margin-top: -2px; }
.second { margin-top: 100px; padding-top: 10px; }
.head { display: flex; height: 21px; line-height: 20px; }
.head .trip { margin-left: 5px; }
.badge { height: 20px; margin: 0 6px; padding: 0 6px; border-radius: 8px; background: #b391f0; }
.head a { color: #6a2fd6; text-decoration: underline; text-underline-offset: 2px; }
.head svg { margin: 5px 0 0 1px; }
.head .fold { margin: 3px 0 0 9px; }
.num { margin-left: auto; }
.when { height: 31px; line-height: 21px; color: #444; }
.dates { width: 844px; display: flex; flex-direction: column; align-items: center; }
.dates h4 { margin: 0; font-size: 17.600px; line-height: 20px; }
.dates h4 + h4 { margin-top: 109px; }
.scroll { margin-left: auto; width: 15px; background: #f1f1f1; display: flex; flex-direction: column; }
.thumb { height: 335px; margin-top: 520px; background: #cdcdcd; }

/* taskbars */
.taskbar { height: 40px; display: flex; align-items: center; color: #fff; background: linear-gradient(90deg, #1f3440 0, #22303a 390px, #26262c 430px, #1c2a38 520px, #1b2c3a 820px, #21242c 1160px, #1b2838 1400px, #1b2a36 1700px, #1e2630 1920px); }
.start { width: 48px; display: flex; justify-content: center; }
.find { width: 344px; height: 40px; background: #f2f2f2; border: 1px solid #c5c5c5; color: #3c3c3c; display: flex; align-items: center; padding-left: 11px; gap: 10px; font-size: 14px; }
.app { height: 40px; display: flex; align-items: center; justify-content: center; border-bottom: 2px solid transparent; flex: none; }
.lit { border-bottom-color: #f381ae; }
.a-files { width: 40px; margin: 0 5px 0 7px; }
.a-opera { width: 48px; background: #ad3236; border-bottom-color: #f00; }
.a-vs { width: 48px; }
.a-eq { width: 40px; margin-left: 6px; }
.a-disc { width: 40px; margin-left: 9px; }
.tray { display: flex; align-items: center; gap: 8px; margin-left: auto; }
.clock { display: flex; flex-direction: column; align-items: center; line-height: 18px; width: 52px; }
.tray + .clock { margin: 0 18px 0 10px; }
.tray svg:nth-child(2) { margin-left: 2px; }
.note { margin-right: 20px; }
.peek { width: 1px; height: 40px; background: #626b75; margin-right: 4px; }
.tb2 { background: linear-gradient(90deg, #232629 0, #1c2d38 130px, #1c2c38 260px, #1c2a36 640px, #21242b 880px, #21222a 1160px, #1b2838 1200px, #1b2a38 1600px, #1c2c36 1750px, #22252c 1920px); }
.tb2 .mag { margin-left: 15px; }
.w { justify-content: flex-start; }
.bak { width: 152px; margin-left: 22px; padding-left: 7px; gap: 9px; }
.op { width: 160px; margin-left: 5px; padding-left: 10px; gap: 4px; background: #ad3236; border-bottom-color: #f00; }
.vs2 { width: 48px; }
.pce { width: 152px; margin-left: 6px; padding-left: 8px; gap: 4px; }
.mvs { width: 152px; margin-left: 9px; padding-left: 6px; gap: 4px; }
.tb2 .clock { margin-left: auto; margin-right: 7px; }

/* explorer */
.title { height: 23px; display: flex; align-items: center; color: #999; }
.title i { width: 1px; height: 12px; background: #888; margin-left: 7px; }
.title .q1 { margin-left: 9px; }
.title .q2 { margin-left: 7px; }
.title .q3 { margin-left: 6px; }
.title span { margin-left: 8px; }
.ctl { margin-left: auto; margin-right: 20px; display: flex; gap: 35px; fill: none; stroke: #888; padding-bottom: 3px; }
.rtabs { height: 24px; display: flex; border-bottom: 1px solid #dadbdc; color: #333; }
.rtabs > span { height: 24px; display: flex; align-items: center; justify-content: center; }
.file { width: 56px; background: #b4004e; color: #fff; margin-bottom: 1px; }
.rtabs .file { height: 23px; }
.home { width: 58px; background: #f5f6f7; border: 1px solid #dadbdc; border-bottom: 0; }
.share { width: 59px; }
.view { width: 53px; }
.help { margin-left: auto; display: flex; align-items: center; gap: 10px; padding-right: 3px; }
.help b { width: 16px; height: 16px; border-radius: 50%; background: #0b63b8; color: #fff; font-size: 11px; line-height: 16px; text-align: center; }
.ribbon { height: 92px; background: #f5f6f7; border-bottom: 1px solid #dadbdc; display: flex; color: #333; }
.group { height: 87px; margin-top: 2px; border-right: 1px solid #dcdddf; display: flex; flex-direction: column; padding-top: 2px; flex: none; }
.clip { width: 263px; }
.org { width: 191px; }
.new { width: 145px; }
.open { width: 133px; }
.sel { width: 115px; }
.group label { text-align: center; color: #555; line-height: 17px; display: block; }
.tools-row { display: flex; height: 69px; }
.big { display: flex; flex-direction: column; align-items: center; padding-top: 3px; line-height: 13px; flex: none; }
.big svg { margin-bottom: 4px; }
.big span { height: 13px; }
.w78 { width: 78px; }
.w32 { width: 32px; }
.w48 { width: 48px; }
.w36 { width: 36px; }
.w40 { width: 40px; }
.w50 { width: 50px; padding-left: 2px; }
.w64 { width: 64px; }
.off { color: #7f8083; }
.vsep { width: 1px; height: 55px; margin: 5px 0 0 8px; background: #d8d9db; }
.smalls { display: flex; flex-direction: column; }
.smalls > div { height: 22px; display: flex; align-items: center; gap: 4px; }
.tight > div { gap: 3px; }
.new .smalls { margin-left: 1px; }
.sel .smalls { margin-left: 7px; }
.tri { display: inline-block; border: 3px solid transparent; border-top-color: #222; border-bottom: 0; margin: 0 0 2px 3px; }
.big .tri { margin-left: 0; }
.address { height: 41px; display: flex; align-items: center; padding-bottom: 1px; }
.ar { fill: none; stroke: #777; stroke-width: 1.700; }
.a1 { margin-left: 12px; }
.a2 { margin-left: 16px; stroke: #d5d5d5; }
.a3 { margin-left: 12px; }
.a4 { margin-left: 12px; margin-right: 7px; stroke: #666; }
.path { width: 1641px; height: 30px; border: 1px solid #d9d9d9; display: flex; align-items: center; }
.pf { margin-left: 3px; }
.ch { fill: none; stroke: #666; stroke-width: 1.200; }
.path > .ch { margin: 0 9px 0 6px; }
.crumb { display: flex; align-items: center; justify-content: space-between; margin-right: 2px; padding-right: 7px; }
.pend { margin-left: auto; margin-right: 9px; fill: none; stroke: #666; stroke-width: 2; }
.refresh { width: 30px; height: 28px; border-left: 1px solid #d9d9d9; display: flex; align-items: center; justify-content: center; fill: none; stroke: #666; stroke-width: 1.500; }
.search { margin-left: 13px; width: 148px; height: 30px; border: 1px solid #d9d9d9; display: flex; align-items: center; padding-left: 13px; gap: 14px; color: #666; }
.search svg { fill: none; stroke: #888; }
.panes { height: 837px; display: flex; }
.nav { width: 159px; border-right: 1px solid #ececec; padding-top: 17px; }
.nv { height: 24px; display: flex; align-items: center; padding-left: 32px; gap: 5px; color: #000; width: 156px; }
.nv.top { padding-left: 24px; margin-top: 8px; }
.nv.top:first-child { margin-top: 0; }
.nv.sel { background: #d9d9d9; }
.pin { margin-left: auto; margin-right: 3px; }
.list { width: 918px; display: flex; flex-direction: column; }
.cols { height: 25px; display: flex; margin-top: 1px; color: #4c607a; }
.cols span { border-right: 1px solid #e5e5e5; height: 25px; line-height: 25px; padding-left: 6px; }
.cols .c1 { width: 273px; padding-left: 18px; }
.c2 { width: 144px; position: relative; }
.c2 svg { position: absolute; left: 68px; top: 1px; }
.c3 { width: 120px; }
.c4 { width: 80px; }
.rows { height: 805px; margin-top: 6px; overflow: hidden; }
.row { height: 21px; display: flex; align-items: center; padding-left: 19px; color: #666; }
.nm { width: 240px; padding-left: 4px; color: #000; }
.dt { width: 144px; }
.ty { width: 106px; }
.sz { width: 84px; text-align: right; }
.escroll { width: 15px; background: #f0f0f0; margin-top: 1px; display: flex; flex-direction: column; }
.ethumb { height: 432px; background: #cdcdcd; }
.dn { margin-top: auto; }
.preview { flex: 1; margin-left: 2px; border-left: 1px solid #eee; display: flex; justify-content: center; color: #6d6d6d; padding-top: 410px; }
.status { height: 23px; display: flex; align-items: center; padding-left: 14px; color: #1e395b; }
.status i { width: 1px; height: 12px; background: #e3e3e3; margin: 0 10px; }
.views { margin-left: auto; display: flex; align-items: center; gap: 4px; padding-right: 8px; }
.v1 { width: 22px; height: 23px; background: #cbe8f6; border: 1px solid #26a0da; display: flex; align-items: center; justify-content: center; }
</style>
